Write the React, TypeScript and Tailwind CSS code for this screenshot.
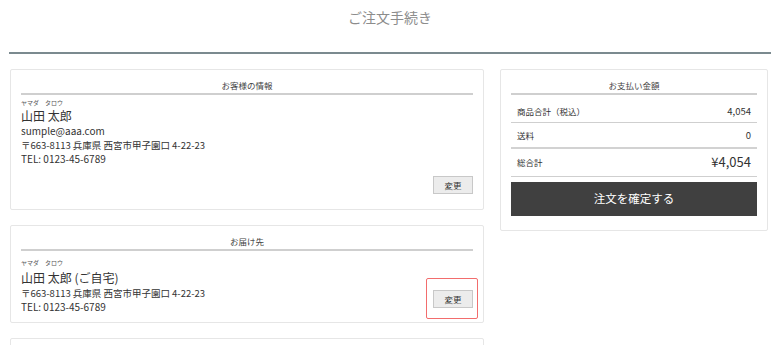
const FONT = "font-['Noto_Sans_CJK_JP','Noto_Sans',sans-serif]";

const ChangeButton = () => (
  <button className="h-[18px] w-[40px] border border-[#c8c8c8] bg-[#ececec] text-[8.5px] leading-none text-[#333]">
    変更
  </button>
);

const CardHeader = ({ title }: { readonly title: string }) => (
  <div className="border-b-2 border-[#cfcfcf] text-center text-[8.5px] leading-[16px] text-[#444]">{title}</div>
);

const Card = ({ children, className = '' }: { readonly children?: React.ReactNode; readonly className?: string }) => (
  <section className={`rounded-[2px] border border-[#e6e6e6] bg-white px-[10px] pt-[7px] ${className}`}>{children}</section>
);

export default function App() {
  return (
    <div className={`h-[345px] w-[780px] overflow-hidden bg-white text-[#333] ${FONT}`}>
      <h1 className="pt-[7px] text-center text-[14px] leading-[20px] text-[#8c8c8c]">ご注文手続き</h1>
      <div className="mx-[9px] mt-[25px] border-b-2 border-[#7b8a8f]" />

      <div className="mt-[15px] grid grid-cols-[474px_268px] items-start gap-x-[16px] px-[10px]">
        <div className="flex flex-col gap-[15px]">
          {/* お客様の情報 */}
          <Card className="pb-[15px]">
            <CardHeader title="お客様の情報" />
            <p className="mt-[3px] text-[6px] leading-[10px] text-[#555]">ヤマダ　タロウ</p>
            <p className="text-[12px] leading-[16px]">山田 太郎</p>
            <p className="text-[10px] leading-[14px]">sumple@aaa.com</p>
            <p className="text-[9.5px] leading-[14px]">〒663-8113 兵庫県 西宮市甲子園口 4-22-23</p>
            <p className="text-[10px] leading-[14px]">TEL: 0123-45-6789</p>
            <div className="mt-[10px] flex justify-end">
              <ChangeButton />
            </div>
          </Card>

          {/* お届け先 */}
          <Card className="pb-[8px]">
            <CardHeader title="お届け先" />
            <div className="flex items-end justify-between">
              <div>
                <p className="mt-[7px] text-[6px] leading-[10px] text-[#555]">ヤマダ　タロウ</p>
                <p className="mt-[2px] text-[12px] leading-[16px]">山田 太郎 (ご自宅)</p>
                <p className="text-[9.5px] leading-[14px]">〒663-8113 兵庫県 西宮市甲子園口 4-22-23</p>
                <p className="text-[10px] leading-[14px]">TEL: 0123-45-6789</p>
              </div>
              <div className="relative mb-[6px] flex">
                <span className="pointer-events-none absolute -top-[12px] -right-[5px] -bottom-[11px] -left-[7px] rounded-[2px] border-[1.5px] border-[#f26d6d]" />
                <ChangeButton />
              </div>
            </div>
          </Card>

          <Card className="h-[60px]" />
        </div>

        {/* お支払い金額 */}
        <Card className="pb-[14px]">
          <CardHeader title="お支払い金額" />
          <div className="flex items-center justify-between border-b border-[#cfcfcf] px-[6px] pt-[9px] pb-[4px] leading-[14px]">
            <span className="text-[8.5px]">商品合計（税込）</span>
            <span className="text-[9.5px]">4,054</span>
          </div>
          <div className="flex items-center justify-between border-b-2 border-[#d2d2d2] px-[6px] py-[5px] leading-[14px]">
            <span className="text-[8.5px]">送料</span>
            <span className="text-[9.5px]">0</span>
          </div>
          <div className="flex items-center justify-between border-b border-[#cfcfcf] px-[6px] pt-[4px] pb-[5px] leading-[18px]">
            <span className="text-[8.5px]">総合計</span>
            <span className="text-[13px]">¥4,054</span>
          </div>
          <button className="mt-[5px] flex h-[34px] w-full items-center justify-center bg-[#404040] text-[11.5px] text-white">
            注文を確定する
          </button>
        </Card>
      </div>
    </div>
  );
}
